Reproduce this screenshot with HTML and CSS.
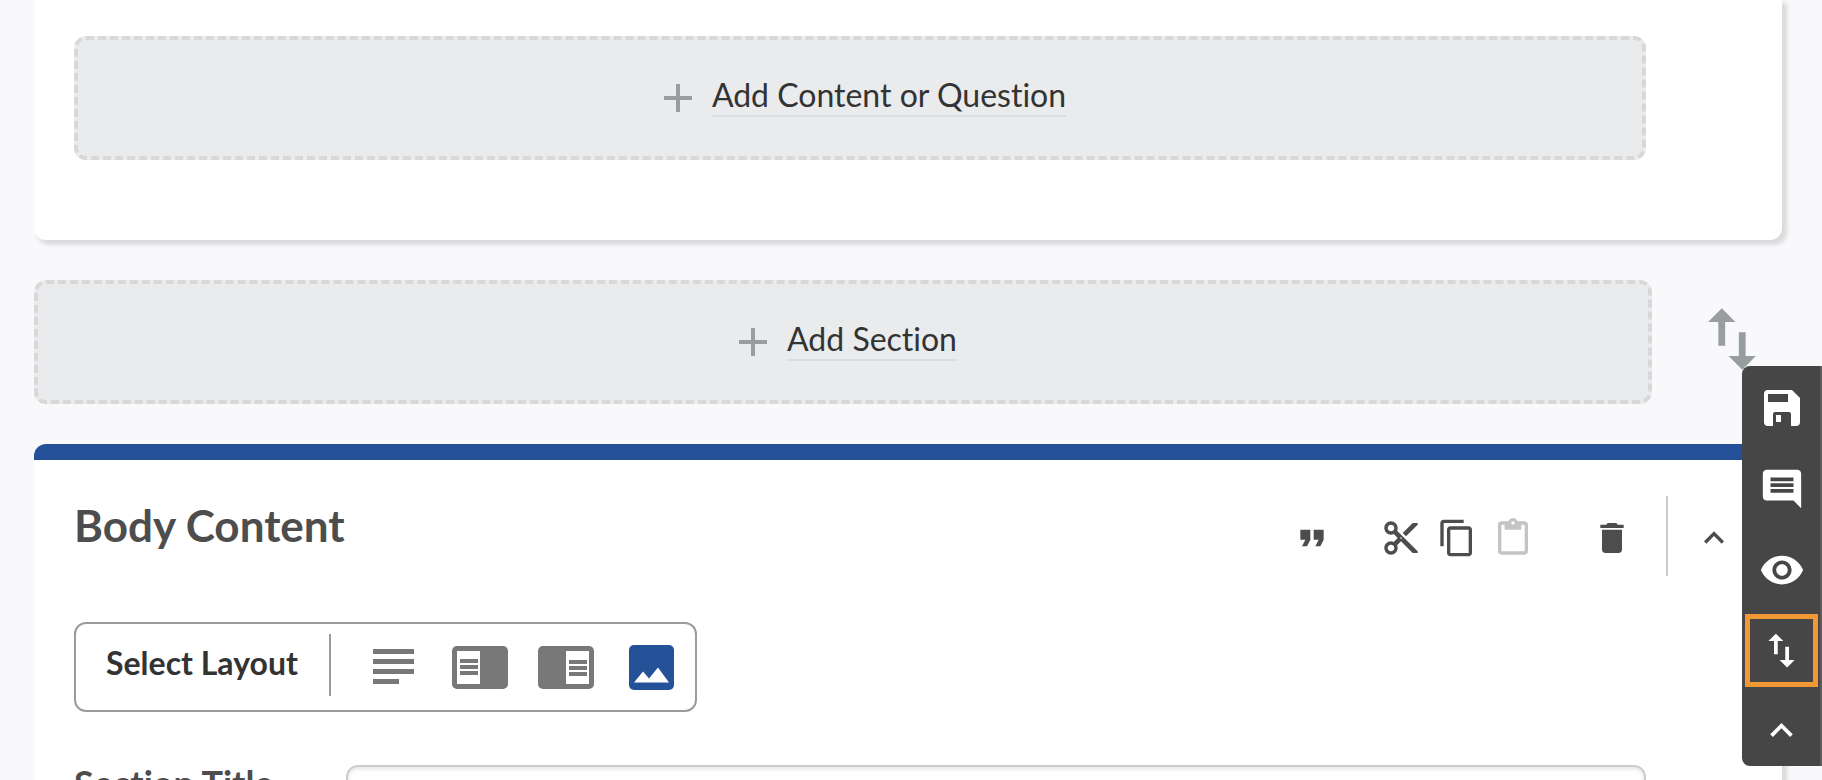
FILE: index.html
```html
<!DOCTYPE html>
<html lang="en">
<head>
<meta charset="utf-8">
<title>Body Content</title>
<link rel="stylesheet" href="styles.css">
</head>
<body>
<main class="page">
  <section class="card card-previous">
    <button class="add-box" type="button">
      <svg class="plus" viewBox="0 0 28 28" aria-hidden="true"><path d="M12 0h4v12h12v4H16v12h-4V16H0v-4h12z"/></svg>
      <span class="add-label">Add Content or Question</span>
    </button>
  </section>

  <div class="section-row">
    <button class="add-box" type="button">
      <svg class="plus" viewBox="0 0 28 28" aria-hidden="true"><path d="M12 0h4v12h12v4H16v12h-4V16H0v-4h12z"/></svg>
      <span class="add-label">Add Section</span>
    </button>
    <button class="icon-button reorder" type="button" aria-label="Reorder sections">
      <svg viewBox="0 0 24 24"><path d="M16 17.01V10h-2v7.01h-3L15 21l4-3.99h-3zM9 3L5 6.99h3V14h2V6.99h3L9 3z"/></svg>
    </button>
  </div>

  <section class="card card-body">
    <header class="card-header">
      <h2 class="card-title">Body Content</h2>
      <div class="actions">
        <button class="icon-button quote" type="button" aria-label="Quote"><svg viewBox="0 0 24 24"><path d="M6 17h3l2-4V7H5v6h3zm8 0h3l2-4V7h-6v6h3z"/></svg></button>
        <div class="clipboard">
          <button class="icon-button" type="button" aria-label="Cut"><svg viewBox="0 0 24 24"><path d="M9.64 7.64c.23-.5.36-1.05.36-1.64 0-2.21-1.79-4-4-4S2 3.79 2 6s1.79 4 4 4c.59 0 1.14-.13 1.64-.36L10 12l-2.36 2.36C7.14 14.13 6.59 14 6 14c-2.21 0-4 1.79-4 4s1.79 4 4 4 4-1.79 4-4c0-.59-.13-1.14-.36-1.64L12 14l7 7h3v-1L9.64 7.64zM6 8c-1.1 0-2-.89-2-2s.9-2 2-2 2 .89 2 2-.9 2-2 2zm0 12c-1.1 0-2-.89-2-2s.9-2 2-2 2 .89 2 2-.9 2-2 2zm6-7.5c-.28 0-.5-.22-.5-.5s.22-.5.5-.5.5.22.5.5-.22.5-.5.5zM19 3l-6 6 2 2 7-7V3z"/></svg></button>
          <button class="icon-button" type="button" aria-label="Copy"><svg viewBox="0 0 24 24"><path d="M16 1H4c-1.1 0-2 .9-2 2v14h2V3h12V1zm3 4H8c-1.1 0-2 .9-2 2v14c0 1.1.9 2 2 2h11c1.1 0 2-.9 2-2V7c0-1.1-.9-2-2-2zm0 16H8V7h11v14z"/></svg></button>
          <button class="icon-button" type="button" aria-label="Paste" disabled><svg viewBox="0 0 24 24"><path d="M19 2h-4.18C14.4.84 13.3 0 12 0c-1.3 0-2.4.84-2.82 2H5c-1.1 0-2 .9-2 2v16c0 1.1.9 2 2 2h14c1.1 0 2-.9 2-2V4c0-1.1-.9-2-2-2zm-7 0c.55 0 1 .45 1 1s-.45 1-1 1-1-.45-1-1 .45-1 1-1zm7 18H5V4h2v3h10V4h2v16z"/></svg></button>
        </div>
        <button class="icon-button trash" type="button" aria-label="Delete"><svg viewBox="0 0 24 24"><path d="M6 19c0 1.1.9 2 2 2h8c1.1 0 2-.9 2-2V7H6v12zM19 4h-3.500l-1-1h-5l-1 1H5v2h14V4z"/></svg></button>
        <div class="collapse">
          <button class="icon-button" type="button" aria-label="Collapse"><svg viewBox="0 0 24 24"><path d="M12 8l-6 6 1.410 1.410L12 10.830l4.590 4.580L18 14z"/></svg></button>
        </div>
      </div>
    </header>

    <div class="layout-picker" role="group" aria-labelledby="layout-label">
      <span class="layout-label" id="layout-label">Select Layout</span>
      <div class="layout-options">
        <button class="layout-option text-only" type="button" aria-label="Text only"><svg viewBox="0 0 41 36"><path d="M0 0h41v5H0zM0 10h41v5H0zM0 20h41v5H0zM0 30h26v5H0z"/></svg></button>
        <button class="layout-option" type="button" aria-label="Text left"><svg viewBox="0 0 56 43"><rect width="56" height="43" rx="5"/><path class="paper" d="M5 5h23v33H5z"/><path d="M8 13h18v4H8zM8 19h18v4H8zM8 25h18v4H8z"/></svg></button>
        <button class="layout-option" type="button" aria-label="Text right"><svg viewBox="0 0 56 43"><rect width="56" height="43" rx="5"/><path class="paper" d="M28 5h23v33H28z"/><path d="M31 14h18v4H31zM31 20h18v4H31zM31 26h18v4H31z"/></svg></button>
        <button class="layout-option image selected" type="button" aria-label="Image" aria-pressed="true"><svg viewBox="0 0 45 45"><rect width="45" height="45" rx="5"/><path class="paper" d="M5 37.500l9-11 6 7 9-11 11 15z"/></svg></button>
      </div>
    </div>

    <div class="field">
      <label class="field-label" for="section-title">Section Title</label>
      <input class="field-input" id="section-title" type="text">
    </div>
  </section>
</main>

<nav class="toolbar" aria-label="Form tools">
  <button class="tool save" type="button" aria-label="Save"><svg viewBox="0 0 36 36"><path fill-rule="evenodd" d="M4 0h24l8 8v24a4 4 0 0 1-4 4h-5V24a2 2 0 0 0-2-2H11a2 2 0 0 0-2 2v12H4a4 4 0 0 1-4-4V4a4 4 0 0 1 4-4zM4 4v8h20V4z"/><path d="M12 25h5v7h-5z"/></svg></button>
  <button class="tool comment" type="button" aria-label="Comments"><svg viewBox="0 0 24 24"><path d="M21.990 4c0-1.100-.89-2-1.990-2H4c-1.100 0-2 .9-2 2v12c0 1.100.9 2 2 2h14l4 4-.01-18zM18 14H6v-2h12v2zm0-3H6V9h12v2zm0-3H6V6h12v2z"/></svg></button>
  <button class="tool preview" type="button" aria-label="Preview"><svg viewBox="0 0 24 24"><path d="M12 4.500C7 4.500 2.730 7.610 1 12c1.730 4.390 6 7.500 11 7.500s9.270-3.110 11-7.500c-1.730-4.390-6-7.500-11-7.500zM12 17c-2.760 0-5-2.240-5-5s2.240-5 5-5 5 2.240 5 5-2.240 5-5 5zm0-8c-1.660 0-3 1.340-3 3s1.340 3 3 3 3-1.340 3-3-1.340-3-3-3z"/></svg></button>
  <button class="tool swap highlighted" type="button" aria-label="Reorder"><svg viewBox="0 0 24 24"><path d="M16 17.010V10h-2v7.010h-3L15 21l4-3.990h-3zM9 3L5 6.990h3V14h2V6.990h3L9 3z"/></svg></button>
  <button class="tool top" type="button" aria-label="Back to top"><svg viewBox="0 0 24 24"><path d="M12 8l-6 6 1.410 1.410L12 10.830l4.590 4.580L18 14z"/></svg></button>
</nav>
</body>
</html>
```
FILE: styles.css
```css
* {
  box-sizing: border-box;
}

body {
  margin: 0;
  height: 100vh;
  overflow: hidden;
  background: #f9f9fb;
  color: #333;
  font-family: Lato, "Open Sans", sans-serif;
  font-variant-ligatures: none;
}

button {
  margin: 0;
  padding: 0;
  border: 0;
  background: none;
  color: inherit;
  font: inherit;
  font-variant-ligatures: none;
  cursor: pointer;
}

svg {
  display: block;
  fill: currentColor;
}

.page {
  display: flex;
  flex-direction: column;
  gap: 40px;
  padding: 0 40px 0 34px;
}

.card {
  background: #fff;
  border-radius: 12px;
  box-shadow: 4px 4px 4px 1px rgba(0, 0, 0, 0.12);
}

.card-previous {
  padding: 36px 136px 80px 40px;
  border-radius: 0 0 12px 12px;
}

.add-box {
  display: flex;
  align-items: center;
  justify-content: center;
  gap: 20px;
  width: 100%;
  height: 124px;
  padding-left: 10px;
  border: 4px dashed #d8d8d8;
  border-radius: 12px;
  background: #e9ebec;
}

.plus {
  width: 28px;
  height: 28px;
  color: #979e9d;
}

.add-label {
  margin-bottom: 4px;
  border-bottom: 2px solid #dcdddf;
  font-size: 32px;
  line-height: 40px;
}

.section-row {
  display: flex;
  align-items: flex-start;
  gap: 39px;
}

.section-row .add-box {
  flex: 1;
}

.icon-button {
  flex: none;
  color: #4d4d4d;
}

.icon-button svg {
  width: 40px;
  height: 40px;
}

.icon-button:disabled {
  color: #c4c4c4;
}

.icon-button.reorder {
  margin: 18px 9px 0 0;
  color: #979e9d;
}

.reorder svg {
  width: 82px;
  height: 82px;
}

.card-body {
  padding-bottom: 60px;
  border-top: 16px solid #255199;
}

.card-header {
  display: flex;
  justify-content: space-between;
  align-items: flex-start;
  padding: 36px 48px 46px 40px;
}

.card-title {
  margin: 0;
  color: #4d4d4d;
  font-size: 44px;
  font-weight: 700;
  line-height: 58px;
}

.actions {
  display: flex;
  align-items: center;
}

.actions .icon-button {
  padding-top: 3px;
}

.clipboard {
  display: flex;
  gap: 16px;
  margin: 0 59px 0 49px;
}

.collapse {
  display: flex;
  align-items: center;
  height: 80px;
  margin-left: 34px;
  padding-left: 26px;
  border-left: 2px solid #ccc;
}

.layout-picker {
  display: flex;
  align-items: center;
  width: fit-content;
  height: 90px;
  margin-left: 40px;
  padding: 0 21px 0 30px;
  border: 2px solid #9b9b9b;
  border-radius: 12px;
}

.layout-label {
  padding-bottom: 8px;
  font-size: 32px;
  font-weight: 700;
  line-height: 40px;
}

.layout-options {
  display: flex;
  align-items: center;
  gap: 30px;
  height: 62px;
  margin: 0 0 4px 31px;
  padding-left: 42px;
  border-left: 2px solid #9b9b9b;
}

.layout-option {
  padding-top: 4px;
  color: #787878;
}

.layout-option svg {
  width: 56px;
  height: 43px;
}

.text-only {
  margin-right: 8px;
}

.text-only svg {
  width: 41px;
  height: 36px;
}

.image {
  margin-left: 5px;
}

.image svg {
  width: 45px;
  height: 45px;
}

.selected {
  color: #255199;
}

.paper {
  fill: #fff;
}

.field {
  display: flex;
  align-items: flex-start;
  margin: 53px 136px 0 40px;
}

.field-label {
  flex: none;
  width: 272px;
  color: #4d4d4d;
  font-size: 36px;
  font-weight: 700;
  line-height: 36px;
}

.field-input {
  flex: 1;
  min-width: 0;
  height: 76px;
  padding: 0 20px;
  border: 2px solid #ccc;
  border-radius: 12px;
  background: #fff;
  box-shadow: inset 0 2px 4px rgba(0, 0, 0, 0.1);
  font: inherit;
  font-size: 32px;
}

.toolbar {
  position: fixed;
  top: 366px;
  right: 0;
  display: flex;
  flex-direction: column;
  align-items: center;
  gap: 8px;
  width: 80px;
  padding: 5px 1px 1px 0;
  border-radius: 8px 0 0 8px;
  background: #464646;
  box-shadow: inset -2px 0 #5c5c5c;
  color: #fff;
}

.tool {
  display: flex;
  align-items: center;
  justify-content: center;
  width: 73px;
  height: 73px;
}

.tool svg {
  width: 46px;
  height: 46px;
}

.save svg {
  width: 36px;
  height: 36px;
}

.swap svg,
.top svg {
  width: 45px;
  height: 45px;
}

.highlighted {
  border: 5px solid #f19733;
}

.top {
  height: 70px;
}
```
